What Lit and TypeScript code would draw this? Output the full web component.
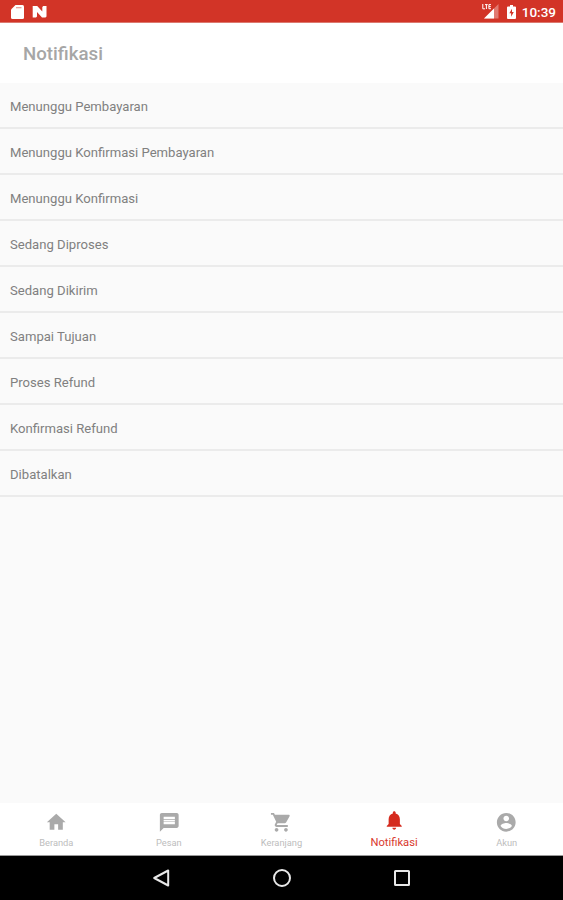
import { LitElement, html, css, svg } from "lit";
import { customElement, property } from "lit/decorators.js";
import { classMap } from "lit/directives/class-map.js";

const icons: Record<string, string> = {
  home: "M10 20v-6h4v6h5v-8h3L12 3 2 12h3v8z",
  message: "M20 2H4c-1.1 0-1.99.9-1.99 2L2 22l4-4h14c1.1 0 2-.9 2-2V4c0-1.1-.9-2-2-2zm-2 12H6v-2.5h12V14zm0-3.2H6V9.2h12v1.6zm0-2.3H6V6h12v2.5z",
  cart: "M7 18c-1.1 0-1.99.9-1.99 2S5.9 22 7 22s2-.9 2-2-.9-2-2-2zM1 2v2h2l3.6 7.59-1.35 2.45c-.16.28-.25.61-.25.96 0 1.1.9 2 2 2h12v-2H7.42c-.14 0-.25-.11-.25-.25l.03-.12.9-1.63h7.45c.75 0 1.41-.41 1.75-1.03l3.58-6.49c.08-.14.12-.31.12-.48 0-.55-.45-1-1-1H5.21l-.94-2H1zm16 16c-1.1 0-1.99.9-1.99 2s.89 2 1.99 2 2-.9 2-2-.9-2-2-2z",
  bell: "M12 22c1.1 0 2-.9 2-2h-4c0 1.1.89 2 2 2zm6-6v-5c0-3.07-1.64-5.64-4.5-6.32V4c0-.83-.67-1.5-1.5-1.5s-1.5.67-1.5 1.5v.68C7.63 5.36 6 7.92 6 11v5l-2 2v1h16v-1l-2-2z",
  account: "M12 2C6.48 2 2 6.48 2 12s4.48 10 10 10 10-4.48 10-10S17.52 2 12 2zm0 3c1.66 0 3 1.34 3 3s-1.34 3-3 3-3-1.34-3-3 1.34-3 3-3zm0 14.2c-2.5 0-4.71-1.28-6-3.22.03-1.99 4-3.08 6-3.08 1.99 0 5.97 1.09 6 3.08-1.29 1.94-3.5 3.22-6 3.22z",
};

@customElement("status-bar")
class StatusBar extends LitElement {
  static styles = css`
    :host {
      display: flex;
      align-items: center;
      height: 23px;
      box-sizing: border-box;
      padding: 1px 7px 0 11px;
      background: #d23427;
      border-bottom: 1px solid #dc796f;
      color: #fff;
      font: 500 13.5px/20px Roboto, sans-serif;
    }
    svg { display: block; fill: #fff; }
    .n { margin-left: 8px; }
    .signal { margin-left: auto; }
    .battery { margin: 0 6px 0 8px; }
  `;
  render() {
    return html`
      <svg width="13" height="14" viewBox="0 0 13 14">
        <path d="M4.5 0H11.5Q13 0 13 1.5V12.5Q13 14 11.5 14H1.5Q0 14 0 12.5V4.5z" />
        <path d="M5 2.7h5.5" stroke="#e69a92" stroke-width="1.2" />
      </svg>
      <svg class="n" width="15" height="13" viewBox="0 0 15 13">
        <path d="M1 1H5.2L10.3 6.6V2L11.3 1H14.5V11.5L13.5 12.5H10L5 7V11.5L4 12.5H.7V1z" />
      </svg>
      <svg class="signal" width="17" height="15" viewBox="0 0 17 15">
        <path d="M16.5 0V14.5H2z" opacity=".35" />
        <path d="M12 4.5V14.5H2z" />
        <path d="M.8 0V4.8H3M3 .6H5.7M4.4 .6V5M9 .6H6.9V4.7H9M6.9 2.6H8.8" fill="none" stroke="#fff" stroke-width="1" />
      </svg>
      <svg class="battery" width="9" height="14" viewBox="0 0 9 14">
        <path d="M3 0H6V1.5H8Q9 1.5 9 2.5V13Q9 14 8 14H1Q0 14 0 13V2.5Q0 1.5 1 1.5H3z" />
        <path d="M5 3.7L2.3 8.3H4.1V11.8L6.8 7H5z" fill="#d23427" />
      </svg>
      <span>10:39</span>
    `;
  }
}

@customElement("nav-tab")
class NavTab extends LitElement {
  @property() icon = "home";
  @property() label = "";
  @property({ type: Boolean }) active = false;
  static styles = css`
    :host { display: block; flex: 1 1 0; min-width: 0; }
    .tab {
      display: flex;
      flex-direction: column;
      align-items: center;
      padding-top: 7.5px;
      color: #aaa;
      font: 400 9.3px/11px Roboto, sans-serif;
    }
    svg { display: block; width: 22.5px; height: 22.5px; fill: currentColor; }
    .label { margin-top: 4px; color: #bdbdbd; }
    .active { padding-top: 5.5px; color: #d52b1e; }
    .active .label { margin-top: 5.5px; color: #d9392e; font-size: 11.2px; }
  `;
  render() {
    return html`<div class=${classMap({ tab: true, active: this.active })}>
      <svg viewBox="0 0 24 24">${svg`<path d=${icons[this.icon]} />`}</svg>
      <span class="label">${this.label}</span>
    </div>`;
  }
}

@customElement("app-root")
class AppRoot extends LitElement {
  private rows = [
    "Menunggu Pembayaran",
    "Menunggu Konfirmasi Pembayaran",
    "Menunggu Konfirmasi",
    "Sedang Diproses",
    "Sedang Dikirim",
    "Sampai Tujuan",
    "Proses Refund",
    "Konfirmasi Refund",
    "Dibatalkan",
  ];
  static styles = css`
    :host {
      display: flex;
      flex-direction: column;
      height: 900px;
      background: #fafafa;
      font-family: Roboto, sans-serif;
    }
    .header {
      height: 60px;
      box-sizing: border-box;
      padding: 1px 0 0 23px;
      background: #fff;
      color: #a6a6a6;
      font-size: 18.7px;
      font-weight: 500;
      line-height: 61px;
    }
    .list { flex: 1; }
    .row {
      height: 46px;
      box-sizing: border-box;
      padding-left: 10px;
      border-bottom: 2px solid #ebebeb;
      color: #808080;
      font-size: 13.1px;
      line-height: 47px;
    }
    .tabs {
      display: flex;
      height: 53px;
      box-sizing: border-box;
      background: #fff;
      border-bottom: 1px solid #999;
    }
    .system {
      display: flex;
      align-items: center;
      justify-content: center;
      gap: 100px;
      height: 44px;
      background: #000;
    }
    .system svg { display: block; width: 20px; height: 20px; fill: none; stroke: #e8e8e8; stroke-width: 2; }
  `;
  render() {
    return html`
      <status-bar></status-bar>
      <div class="header">Notifikasi</div>
      <div class="list">${this.rows.map((r) => html`<div class="row">${r}</div>`)}</div>
      <div class="tabs">
        <nav-tab icon="home" label="Beranda"></nav-tab>
        <nav-tab icon="message" label="Pesan"></nav-tab>
        <nav-tab icon="cart" label="Keranjang"></nav-tab>
        <nav-tab icon="bell" label="Notifikasi" active></nav-tab>
        <nav-tab icon="account" label="Akun"></nav-tab>
      </div>
      <div class="system">
        <svg viewBox="0 0 20 20"><path d="M16.2 2.5V17.5L2.2 10z" stroke-linejoin="round" /></svg>
        <svg viewBox="0 0 20 20"><circle cx="10" cy="10" r="8" /></svg>
        <svg viewBox="0 0 20 20"><rect x="3" y="3" width="14" height="14" rx=".5" /></svg>
      </div>
    `;
  }
}
